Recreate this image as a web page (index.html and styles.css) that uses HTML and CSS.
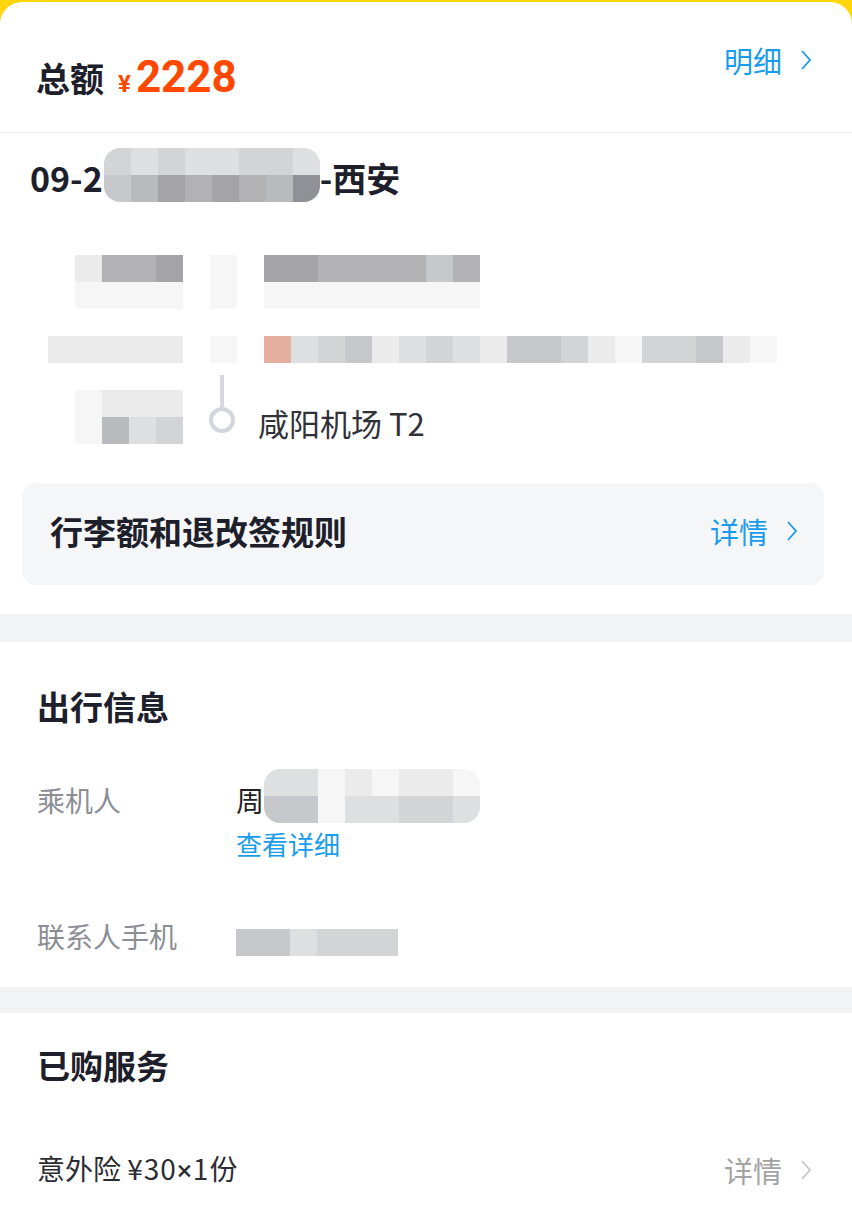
FILE: index.html
```html
<!DOCTYPE html>
<html lang="zh-CN">
<head>
<meta charset="utf-8">
<title>订单详情</title>
<link rel="stylesheet" href="styles.css">
</head>
<body>
<div id="page">

  <div class="total-bar">
    <div class="total">
      <span class="total-label">总额</span>
      <span class="yen">¥</span><span class="amount">2228</span>
    </div>
    <a class="link-blue total-link">明细
      <svg class="chev" width="12" height="22" viewBox="0 0 12 22"><polyline points="2,2 10,11 2,20" /></svg>
    </a>
  </div>

  <h2 class="flight-title">09-2<span class="mosaic blob title-mosaic">
      <span class="mrow"><i class="c3"></i><i class="c2"></i><i class="c3"></i><i class="c2"></i><i class="c2"></i><i class="c3"></i><i class="c3"></i><i class="c2"></i></span>
      <span class="mrow"><i class="c4"></i><i class="c5"></i><i class="c7"></i><i class="c6"></i><i class="c7"></i><i class="c6"></i><i class="c5"></i><i class="c8"></i></span>
    </span>-西安</h2>

  <!-- route (redacted) -->
  <div class="route">
    <div class="rrow">
      <div class="rl"><i class="c1"></i><i class="c6"></i><i class="c6"></i><i class="c7"></i></div>
      <div class="rm"><i class="c0"></i></div>
      <div class="rr"><i class="c7"></i><i class="c7"></i><i class="c6"></i><i class="c6"></i><i class="c6"></i><i class="c6"></i><i class="c4"></i><i class="c6"></i></div>
    </div>
    <div class="rrow">
      <div class="rl"><i class="c0"></i><i class="c0"></i><i class="c0"></i><i class="c0"></i></div>
      <div class="rm"><i class="c0"></i></div>
      <div class="rr"><i class="c0"></i><i class="c0"></i><i class="c0"></i><i class="c0"></i><i class="c0"></i><i class="c0"></i><i class="c0"></i><i class="c0"></i></div>
    </div>
    <div class="rrow gap">
      <div class="rl"><i class="c1"></i><i class="c1"></i><i class="c1"></i><i class="c1"></i><i class="c1"></i></div>
      <div class="rm"><i class="c0"></i></div>
      <div class="rr"><i class="cs"></i><i class="c2"></i><i class="c3"></i><i class="c4"></i><i class="c1"></i><i class="c2"></i><i class="c3"></i><i class="c2"></i><i class="c1"></i><i class="c4"></i><i class="c4"></i><i class="c3"></i><i class="c1"></i><i class="c0"></i><i class="c3"></i><i class="c3"></i><i class="c4"></i><i class="c1"></i><i class="c0"></i></div>
    </div>
    <div class="arrive">
      <div class="rl stack">
        <span class="mrow"><i class="c0"></i><i class="c1"></i><i class="c1"></i><i class="c1"></i></span>
        <span class="mrow"><i class="c0"></i><i class="c5"></i><i class="c2"></i><i class="c3"></i></span>
      </div>
      <div class="axis"><span class="axis-line"></span><span class="axis-dot"></span></div>
      <div class="airport">咸阳机场 T2</div>
    </div>
  </div>

  <div class="rules">
    <span class="rules-title">行李额和退改签规则</span>
    <a class="link-blue">详情
      <svg class="chev" width="12" height="22" viewBox="0 0 12 22"><polyline points="2,2 10,11 2,20" /></svg>
    </a>
  </div>

  <div class="sep sep-a"></div>

  <div class="section info">
    <h3 class="section-title">出行信息</h3>
    <div class="info-row">
      <span class="info-label">乘机人</span>
      <div class="info-value">
        <div class="passenger">周<span class="mosaic blob pass-mosaic">
            <span class="mrow"><i class="c2"></i><i class="c2"></i><i class="c0"></i><i class="c1"></i><i class="c0"></i><i class="c1"></i><i class="c1"></i><i class="c0"></i></span>
            <span class="mrow"><i class="c4"></i><i class="c4"></i><i class="c0"></i><i class="c2"></i><i class="c2"></i><i class="c3"></i><i class="c3"></i><i class="c2"></i></span>
          </span></div>
        <a class="link-blue small">查看详细</a>
      </div>
    </div>
    <div class="info-row phone-row">
      <span class="info-label">联系人手机</span>
      <div class="info-value">
        <span class="mosaic phone-mosaic"><span class="mrow"><i class="c4"></i><i class="c4"></i><i class="c2"></i><i class="c3"></i><i class="c3"></i><i class="c3"></i></span></span>
      </div>
    </div>
  </div>

  <div class="sep sep-b"></div>

  <div class="section services">
    <h3 class="section-title">已购服务</h3>
    <div class="service-row">
      <span class="service-name">意外险 <span class="num">¥30<span class="times">×</span>1</span>份</span>
      <a class="link-gray">详情
        <svg class="chev" width="12" height="22" viewBox="0 0 12 22"><polyline points="2,2 10,11 2,20" /></svg>
      </a>
    </div>
  </div>

</div>
</body>
</html>
```

FILE: styles.css
```css
* {
    box-sizing: border-box;
}
body {
    margin: 0;
    background: #ffd60c;
    font-family: "Noto Sans CJK SC", "Noto Sans", sans-serif;
    color: #1d202b;
}
a {
    text-decoration: none;
}
#page {
    margin-top: 2px;
    min-height: 1218px;
    background: #fff;
    border-radius: 22px 22px 0 0;
    overflow: hidden;
}

/* top total */
.total-bar {
    height: 131px;
    border-bottom: 1px solid #eeeff1;
    display: flex;
    justify-content: space-between;
    align-items: flex-start;
    padding: 0 40px 0 36px;
}
.total {
    margin-top: 50px;
    line-height: 50px;
    display: flex;
    align-items: baseline;
}
.total-label {
    font-size: 34px;
    font-weight: 700;
    margin-right: 14px;
}
.yen {
    font-family: Roboto, sans-serif;
    font-weight: 700;
    font-size: 24px;
    color: #ff4800;
    margin-right: 5px;
}
.amount {
    font-family: Roboto, sans-serif;
    font-weight: 700;
    font-size: 44px;
    color: #ff4800;
}
.total-link {
    margin-top: 36px;
}

.link-blue, .link-gray {
    display: flex;
    align-items: center;
    font-size: 29px;
    line-height: 44px;
    color: #1a9cec;
}
.link-gray {
    color: #a3a3a3;
}
.chev {
    margin-left: 18px;
    fill: none;
    stroke: #1a9cec;
    stroke-width: 1.8;
}
.link-gray .chev {
    stroke: #c6c6c6;
}
.link-blue.small {
    font-size: 26px;
}

/* flight title */
.flight-title {
    margin: 0;
    padding: 21px 0 0 30px;
    font-size: 34px;
    font-weight: 700;
    line-height: 48px;
    display: flex;
    align-items: center;
}

/* mosaic cells */
.mosaic {
    display: inline-flex;
    flex-direction: column;
}
.mrow {
    display: flex;
}
.mosaic i, .rrow i, .mrow i {
    display: block;
    width: 27px;
    height: 27px;
}
.blob {
    border-radius: 16px;
    overflow: hidden;
}
.c0 { background: #f6f6f7; }
.c1 { background: #ebebec; }
.c2 { background: #dedfe1; }
.c3 { background: #d3d4d6; }
.c4 { background: #c7c8cb; }
.c5 { background: #b9babd; }
.c6 { background: #b2b2b4; }
.c7 { background: #a4a4a6; }
.c8 { background: #8f9197; }
.cs { background: #e4afa0; }

.title-mosaic {
    margin: -6px 0 0 1px;
}

/* route */
.route {
    padding: 53px 0 0 48px;
}
.rrow {
    display: flex;
}
.rrow.gap {
    margin-top: 27px;
}
.rl {
    width: 135px;
    display: flex;
    justify-content: flex-end;
}
.rl.stack {
    flex-direction: column;
    align-items: flex-end;
    margin-top: 15px;
}
.rm {
    width: 27px;
    margin: 0 27px;
}
.rr {
    display: flex;
}
.arrive {
    display: flex;
    margin-top: 12px;
}
.axis {
    width: 27px;
    margin: 0 23px 0 25px;
    display: flex;
    flex-direction: column;
    align-items: center;
}
.axis-line {
    width: 4px;
    height: 32px;
    background: #d6d8dd;
}
.axis-dot {
    width: 26px;
    height: 26px;
    border: 4px solid #d3d5da;
    border-radius: 50%;
}
.airport {
    margin-top: 30px;
    font-size: 31px;
    line-height: 36px;
    color: #303238;
}

/* rules box */
.rules {
    margin: 39px 28px 29px 22px;
    height: 102px;
    border-radius: 14px;
    background: #f5f6f8;
    display: flex;
    justify-content: space-between;
    align-items: center;
    padding: 0 26px 6px 28px;
}
.rules-title {
    font-size: 33px;
    font-weight: 700;
}

.sep {
    background: #f2f3f5;
}
.sep-a {
    height: 28px;
}
.sep-b {
    height: 26px;
}

/* sections */
.section {
    padding: 0 40px 0 37px;
}
.section-title {
    margin: 0;
    font-size: 33px;
    font-weight: 700;
    line-height: 48px;
}
.info {
    padding-top: 40px;
    padding-bottom: 26px;
}
.info-row {
    display: flex;
    margin-top: 48px;
}
.info-label {
    width: 199px;
    font-size: 28px;
    line-height: 44px;
    color: #8b8e95;
}
.passenger {
    display: flex;
    align-items: flex-start;
    font-size: 28px;
    line-height: 44px;
    color: #222;
}
.pass-mosaic {
    margin: -9px 0 -10px 0;
}
.phone-mosaic {
    margin-top: 15px;
}
.services {
    padding-top: 28px;
}
.service-row {
    margin-top: 57px;
    display: flex;
    justify-content: space-between;
    align-items: center;
    font-size: 28px;
    line-height: 44px;
    color: #2b2d33;
}
.service-name .num {
    letter-spacing: 1px;
}
.service-name .times {
    font-family: Roboto, sans-serif;
}
```
